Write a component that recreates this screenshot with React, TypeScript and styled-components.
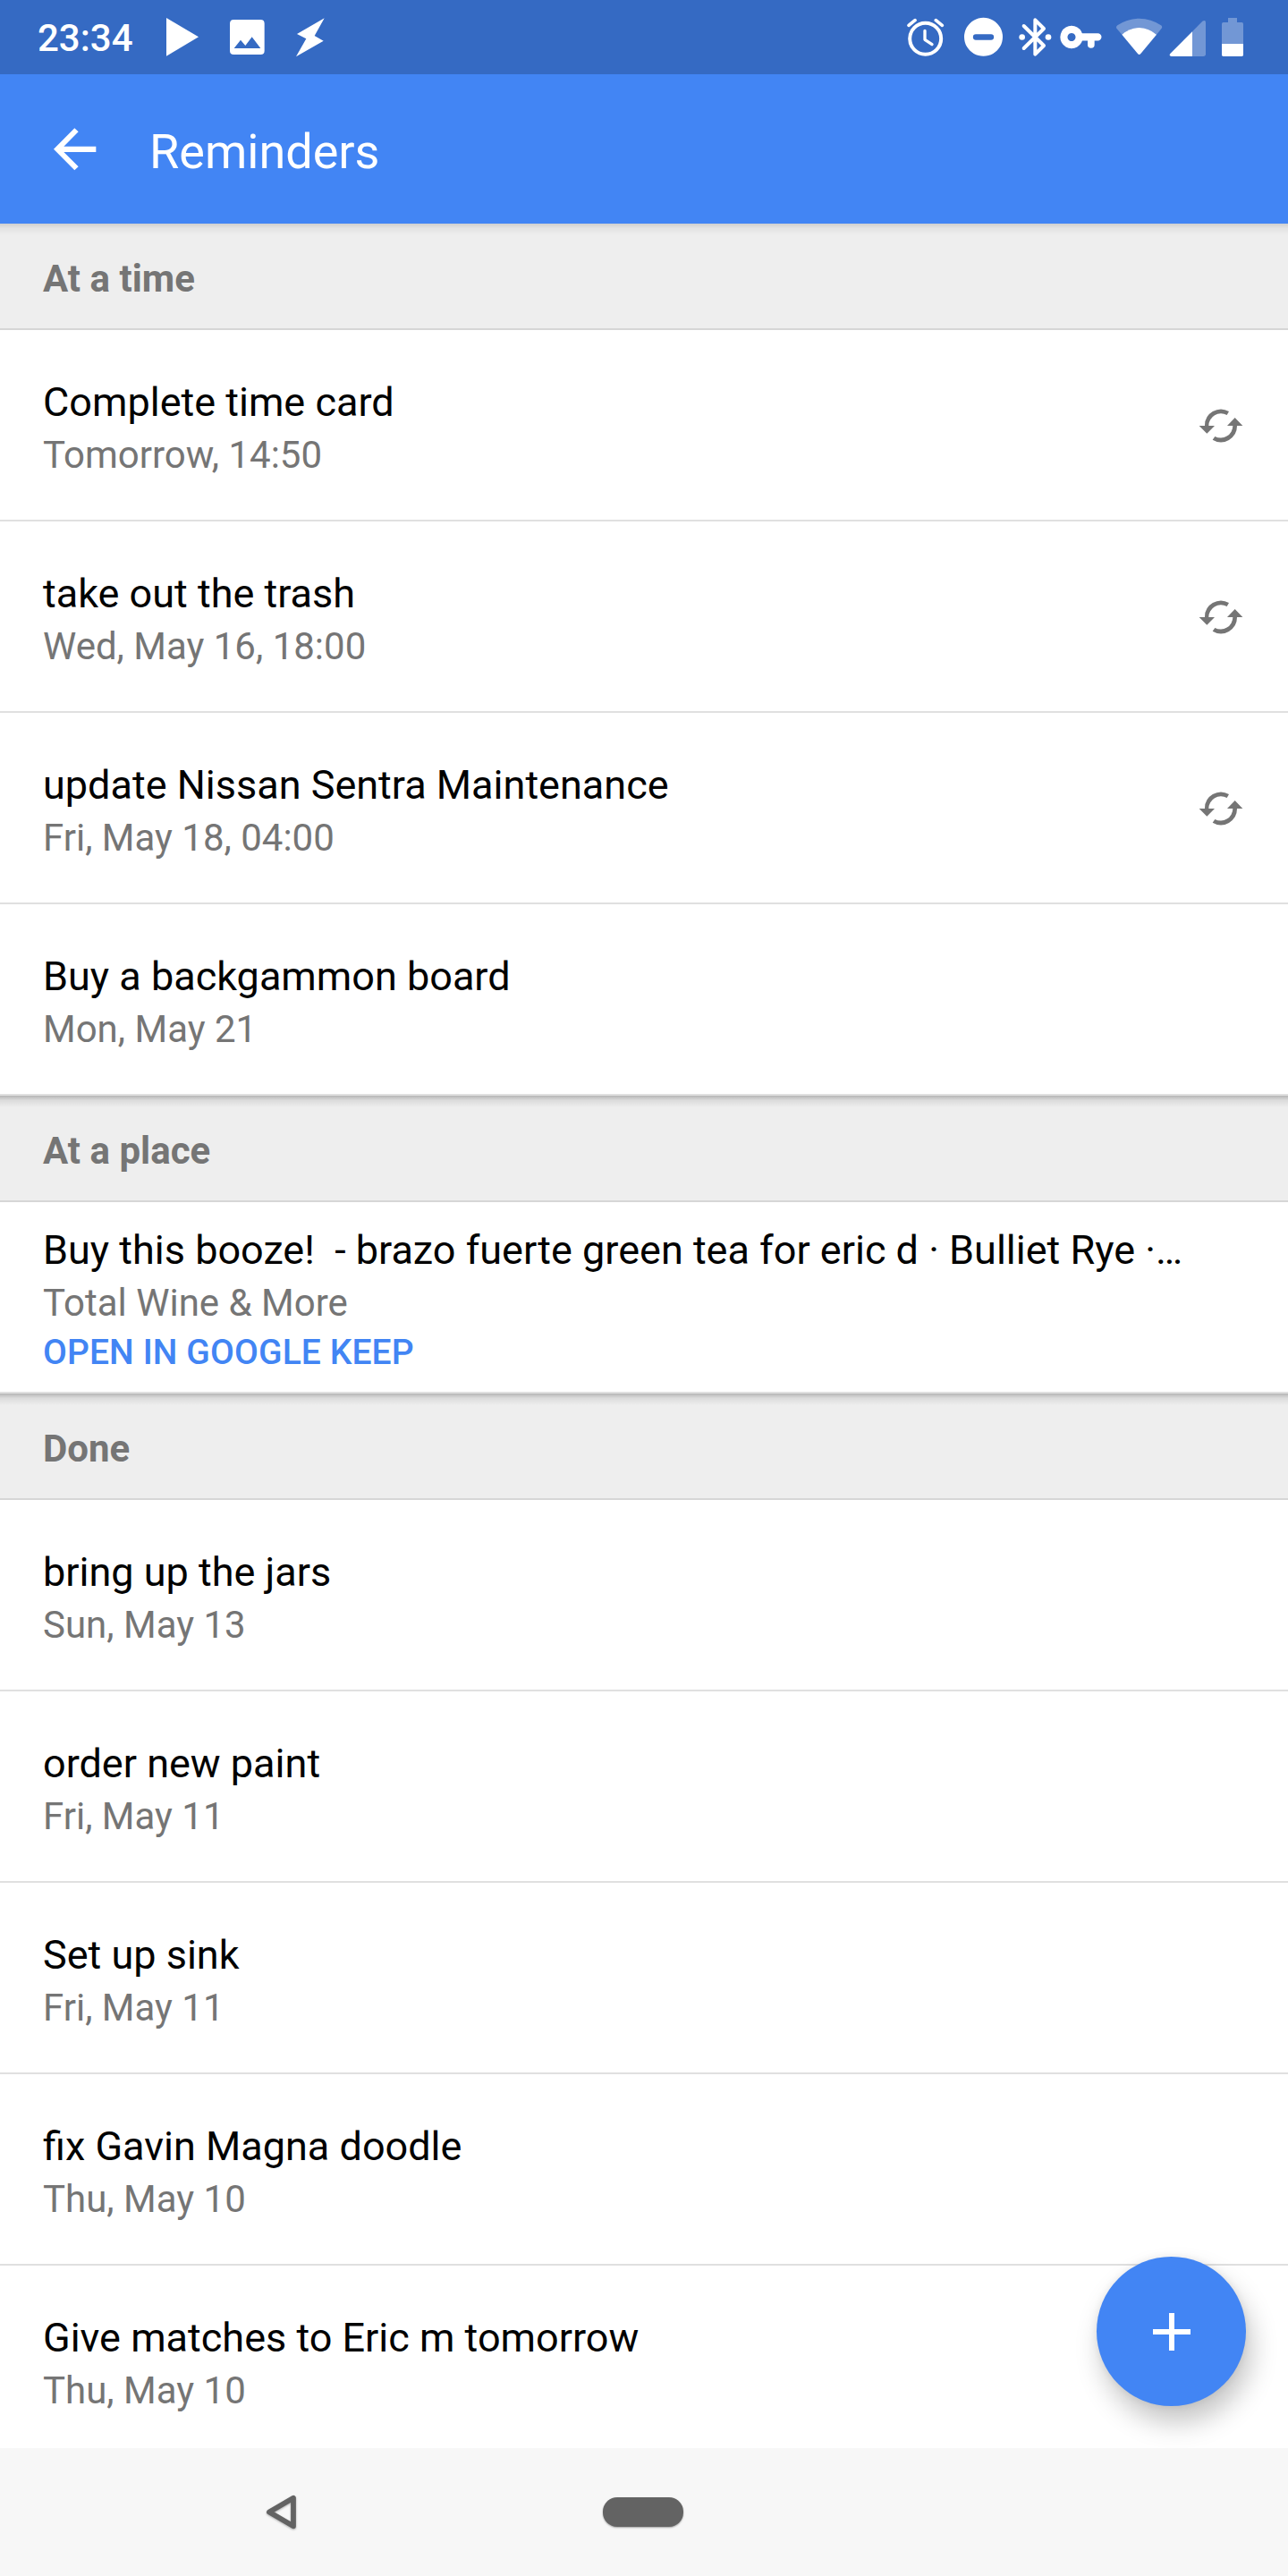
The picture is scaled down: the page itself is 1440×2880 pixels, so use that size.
import React from "react";
import styled, { createGlobalStyle } from "styled-components";

const GlobalStyle = createGlobalStyle`
  body { margin: 0; background: #fff; }
  * { box-sizing: border-box; }
`;

const Screen = styled.div`
  position: relative;
  display: flex;
  flex-direction: column;
  width: 1440px;
  height: 2880px;
  overflow: hidden;
  background: #fff;
  font-family: Roboto, "Liberation Sans", sans-serif;
`;

const StatusBar = styled.header`
  display: flex;
  flex: none;
  align-items: center;
  justify-content: space-between;
  height: 83px;
  padding: 0 49px 0 42px;
  background: #356ac3;
  color: #fff;
`;

const IconGroup = styled.div`
  display: flex;
  align-items: center;
`;

const Clock = styled.span`
  width: 143px;
  padding-top: 3px;
  font-size: 42px;
  font-weight: 500;
  line-height: 50px;
`;

const Glyph = styled.svg<{ $w: number; $gap?: number }>`
  flex: none;
  width: ${(p) => p.$w}px;
  height: 47px;
  margin-left: ${(p) => p.$gap ?? 0}px;
  fill: currentColor;
`;

const AppBar = styled.div`
  display: flex;
  flex: none;
  align-items: center;
  height: 167px;
  padding-left: 60px;
  background: #4285f4;
  color: #fff;
`;

const BackArrow = styled.svg`
  width: 48px;
  height: 48px;
  fill: currentColor;
`;

const PageTitle = styled.h1`
  margin: 0 0 0 59px;
  padding-top: 6px;
  font-size: 54px;
  font-weight: 400;
  line-height: 64px;
`;

const List = styled.main`
  flex: 1;
  min-height: 0;
  overflow: hidden;
`;

const SectionHeader = styled.h2<{ $shade: number }>`
  height: 119px;
  margin: 0;
  padding: 33px 48px 0;
  border-bottom: 2px solid #d6d6d6;
  background: linear-gradient(
      rgba(0, 0, 0, ${(p) => p.$shade}),
      rgba(0, 0, 0, ${(p) => p.$shade * 0.35}) 5px,
      rgba(0, 0, 0, 0) 13px
    ) #eee;
  color: #757575;
  font-size: 42px;
  font-weight: 700;
  line-height: 58px;
`;

const Row = styled.article<{ $compact?: boolean }>`
  display: flex;
  justify-content: space-between;
  height: 214px;
  padding: ${(p) => (p.$compact ? 25 : 52)}px 50px 0 48px;
  border-bottom: 2px solid #e0e0e0;
  background: #fff;
`;

const Title = styled.div`
  color: #000;
  font-size: 45px;
  line-height: 58px;
  white-space: pre;
`;

const Detail = styled.div`
  color: #757575;
  font-size: 42px;
  line-height: 59px;
`;

const KeepLink = styled.a`
  display: block;
  color: #4285f4;
  font-size: 39px;
  font-weight: 500;
  letter-spacing: 0.1px;
  line-height: 52px;
`;

const Repeat = styled.svg`
  flex: none;
  width: 50px;
  height: 38px;
  margin-top: 36px;
  fill: #757575;
`;

const Fab = styled.button`
  position: absolute;
  right: 47px;
  bottom: 190px;
  display: flex;
  align-items: center;
  justify-content: center;
  width: 167px;
  height: 167px;
  padding: 0;
  border: 0;
  border-radius: 50%;
  background: #4285f4;
  box-shadow: 6px 18px 30px rgba(0, 0, 0, 0.23), 0 0 8px rgba(0, 0, 0, 0.08);
`;

const NavBar = styled.nav`
  position: relative;
  display: flex;
  flex: none;
  align-items: center;
  height: 143px;
  padding-left: 295px;
  background: #f7f7f7;
`;

const NavBack = styled.svg`
  width: 39px;
  height: 43px;
  fill: none;
  stroke: #636363;
  stroke-width: 5.8;
  stroke-linejoin: round;
  filter: drop-shadow(0 1px 1px rgba(0, 0, 0, 0.3));
`;

const HomePill = styled.div`
  width: 90px;
  height: 33px;
  margin-left: 340px;
  border-radius: 16px;
  background: #636363;
  box-shadow: 0 1px 2px rgba(0, 0, 0, 0.35);
`;

type Reminder = { title: string; detail: string; repeats?: boolean; keep?: boolean };
type Section = { name: string; shade: number; items: Reminder[] };

const sections: Section[] = [
  {
    name: "At a time",
    shade: 0.13,
    items: [
      { title: "Complete time card", detail: "Tomorrow, 14:50", repeats: true },
      { title: "take out the trash", detail: "Wed, May 16, 18:00", repeats: true },
      { title: "update Nissan Sentra Maintenance", detail: "Fri, May 18, 04:00", repeats: true },
      { title: "Buy a backgammon board", detail: "Mon, May 21" },
    ],
  },
  {
    name: "At a place",
    shade: 0.24,
    items: [
      {
        title: "Buy this booze!  - brazo fuerte green tea for eric d · Bulliet Rye ·…",
        detail: "Total Wine & More",
        keep: true,
      },
    ],
  },
  {
    name: "Done",
    shade: 0.24,
    items: [
      { title: "bring up the jars", detail: "Sun, May 13" },
      { title: "order new paint", detail: "Fri, May 11" },
      { title: "Set up sink", detail: "Fri, May 11" },
      { title: "fix Gavin Magna doodle", detail: "Thu, May 10" },
      { title: "Give matches to Eric m tomorrow", detail: "Thu, May 10" },
    ],
  },
];

const NotificationIcons = () => (
  <>
    <Glyph $w={38} viewBox="555 54 114 141">
      <path d="M558 60 L666 124 L558 188Z" />
    </Glyph>
    <Glyph $w={41} $gap={33} viewBox="768 54 123 141">
      <path
        fillRule="evenodd"
        d="M784 66H874Q887 66 887 79V170Q887 183 874 183H784Q771 183 771 170V79Q771 66 784 66Z M785 162H874L845 124L823 153L807 134Z"
      />
    </Glyph>
    <Glyph $w={34} $gap={33} viewBox="990 54 102 141">
      <path d="M1088 61L1055 120L1085 137L993 190L1027 130L996 114Z" />
    </Glyph>
  </>
);

const SystemIcons = () => (
  <>
    <Glyph $w={43} viewBox="99 54 129 141">
      <g fill="none" stroke="currentColor" strokeLinecap="round" strokeLinejoin="round">
        <circle cx="164" cy="130" r="52.5" strokeWidth="12" />
        <path d="M162 103V133L186 149" strokeWidth="10" />
        <path d="M108 85L129 68M220 85L199 68" strokeWidth="11" />
      </g>
    </Glyph>
    <Glyph $w={45} $gap={21} viewBox="291 54 135 141">
      <path
        fillRule="evenodd"
        d="M358.500 59.500a64.500 64.500 0 1 0 .01 0Z M333 115H384a9.500 9.500 0 0 1 0 19H333a9.500 9.500 0 0 1 0-19Z"
      />
    </Glyph>
    <Glyph $w={39} $gap={16} viewBox="474 54 117 141">
      <path
        d="M494 87L561 153L532 182V67L561 96L494 162"
        fill="none"
        stroke="currentColor"
        strokeWidth="12"
        strokeLinecap="round"
        strokeLinejoin="round"
      />
      <circle cx="488" cy="124.500" r="10" />
      <circle cx="576" cy="124.500" r="10" />
    </Glyph>
    <Glyph $w={49} $gap={7} viewBox="612 54 147 141">
      <path
        fillRule="evenodd"
        d="M654 86.500a38 38 0 1 0 .01 0Z M654 111a13.500 13.500 0 1 1 -.01 0Z"
      />
      <path d="M684 111.500H742a12.500 12.500 0 0 1 0 25H731V150a11.500 11.500 0 0 1-23 0V136.500H684Z" />
    </Glyph>
    <Glyph $w={53} $gap={14} viewBox="801 54 159 141">
      <path
        opacity=".3"
        d="M808 85Q841 62 881 62T954 85Q960 89 956 95L939 116Q912 93 881 93T823 116L805 95Q802 89 808 85Z"
      />
      <path d="M823 116Q850 93 881 93T939 116L886 180Q881 186 876 180Z" />
    </Glyph>
    <Glyph $w={42} $gap={7} viewBox="981 54 126 141">
      <path opacity=".3" d="M1059 106L1093 71Q1104 65 1104 76V181Q1104 189 1096 189H1059Z" />
      <path d="M1059 106V189H989Q980 187 985 180Z" />
    </Glyph>
    <Glyph $w={26} $gap={16} viewBox="1155 54 78 141">
      <path
        opacity=".3"
        d="M1158 147V80Q1158 75 1163 75H1179V60H1209V75H1225Q1230 75 1230 80V147Z"
      />
      <path d="M1158 147H1230V184Q1230 189 1225 189H1163Q1158 189 1158 184Z" />
    </Glyph>
  </>
);

const RepeatIcon = () => (
  <Repeat viewBox="120 111 150 114">
    <path d="M122 168H141A54 54 0 0 1 222 120L215 132A41 41 0 0 0 154 168H174L148 194Z" />
    <path d="M268 168H249A54 54 0 0 1 167 215L175 204A41 41 0 0 0 235 168H216L242 141Z" />
  </Repeat>
);

export default function App() {
  return (
    <Screen>
      <GlobalStyle />
      <StatusBar>
        <IconGroup>
          <Clock>23:34</Clock>
          <NotificationIcons />
        </IconGroup>
        <IconGroup>
          <SystemIcons />
        </IconGroup>
      </StatusBar>
      <AppBar>
        <BackArrow viewBox="180 428 144 144">
          <path d="M322 490H214L263 441L250 429L180 499.500L250 570L263 558L214 509H322Z" />
        </BackArrow>
        <PageTitle>Reminders</PageTitle>
      </AppBar>
      <List>
        {sections.map((section) => (
          <section key={section.name}>
            <SectionHeader $shade={section.shade}>{section.name}</SectionHeader>
            {section.items.map((item) => (
              <Row key={item.title} $compact={item.keep}>
                <div>
                  <Title>{item.title}</Title>
                  <Detail>{item.detail}</Detail>
                  {item.keep && <KeepLink>OPEN IN GOOGLE KEEP</KeepLink>}
                </div>
                {item.repeats && <RepeatIcon />}
              </Row>
            ))}
          </section>
        ))}
      </List>
      <Fab aria-label="Add reminder">
        <svg width="42" height="42" viewBox="0 0 42 42" fill="#fff">
          <path d="M18 0h6v18h18v6H24v18h-6V24H0v-6h18Z" />
        </svg>
      </Fab>
      <NavBar>
        <NavBack viewBox="295 2787 39 43">
          <path d="M301 2808.500L328 2792.700V2824.300Z" />
        </NavBack>
        <HomePill />
      </NavBar>
    </Screen>
  );
}
